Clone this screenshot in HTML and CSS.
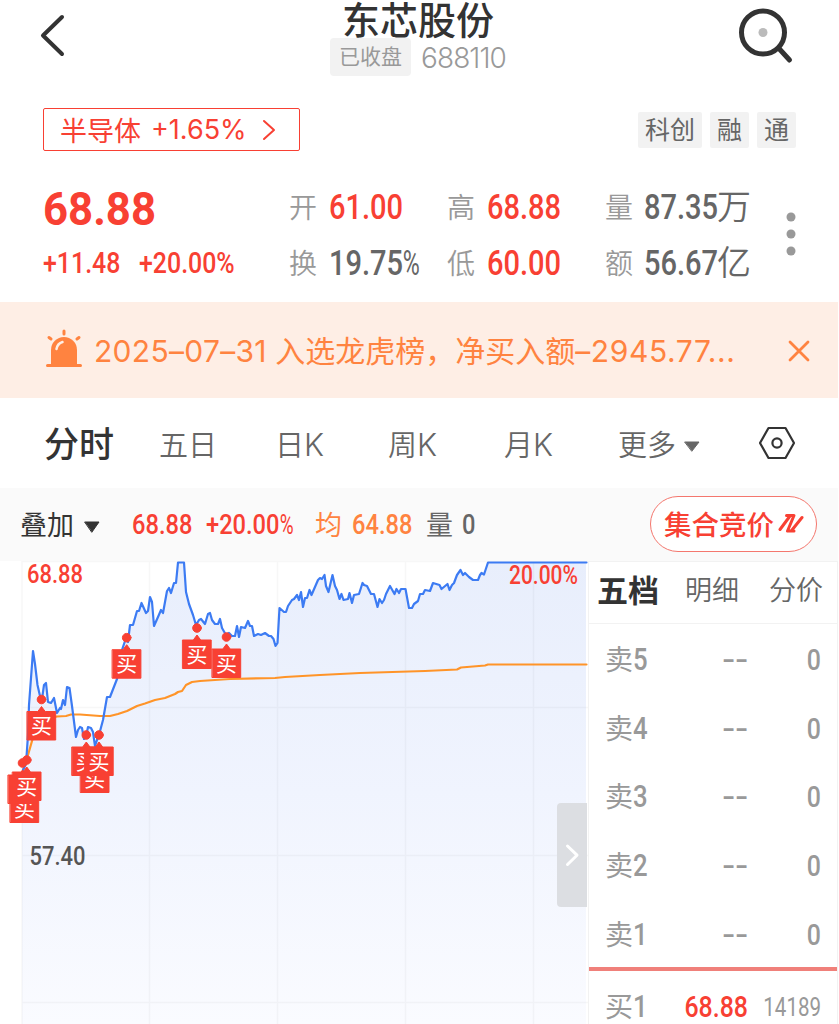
FILE: index.html
```html
<!DOCTYPE html>
<html lang="zh-CN">
<head>
    <meta charset="UTF-8">
    <meta name="viewport" content="width=device-width, initial-scale=1.0">
    <title>东芯股份 688110</title>
    <link rel="stylesheet" href="styles.css">
</head>
<body>
    <header class="header">
        <svg class="back" width="30" height="44" viewBox="0 0 30 44"><path d="M24 4 5 22.500 24 41"/></svg>
        <div class="title">
            <h1>东芯股份</h1>
            <div class="subtitle"><span class="status">已收盘</span><span class="code">688110</span></div>
        </div>
        <svg class="search" width="60" height="60" viewBox="0 0 60 60">
            <circle cx="28" cy="27.500" r="21.500"/>
            <path d="M44 43.500 54.500 55"/>
            <circle class="dot" cx="28" cy="27.500" r="4.500"/>
        </svg>
    </header>

    <div class="sector-row">
        <a class="sector"><span>半导体</span><span class="sector-pct">+1.65%</span>
            <svg width="14" height="22" viewBox="0 0 14 22"><path d="M2 2 12 11 2 20"/></svg>
        </a>
        <div class="tags"><span>科创</span><span>融</span><span>通</span></div>
    </div>

    <section class="quote">
        <div class="price">
            <div class="last num">68.88</div>
            <div class="change"><span class="num">+11.48</span><span class="num">+20.00%</span></div>
        </div>
        <div class="stats">
            <label>开</label><span class="num red">61.00</span>
            <label>高</label><span class="num red">68.88</span>
            <label>量</label><span class="amount"><b class="num">87.35</b><i>万</i></span>
            <label>换</label><span class="num">19.75<small>%</small></span>
            <label>低</label><span class="num red">60.00</span>
            <label>额</label><span class="amount"><b class="num">56.67</b><i>亿</i></span>
        </div>
        <svg class="more" width="10" height="46" viewBox="0 0 10 46"><circle cx="5" cy="6" r="4.500"/><circle cx="5" cy="23" r="4.500"/><circle cx="5" cy="40" r="4.500"/></svg>
    </section>

    <div class="notice">
        <svg class="alarm" width="38" height="40" viewBox="0 0 38 40">
            <path d="M6 36V21a13 13 0 0 1 26 0v15z"/>
            <path class="ray" d="M2.500 36.500h33M19 2v3M4 8.500l2 1.500M34 8.500 32 10"/>
            <path class="shine" d="M11.500 20q1-5.500 6-7"/>
        </svg>
        <p><span class="date">2025–07–31</span> 入选龙虎榜，净买入额<span class="sum">–2945.77...</span></p>
        <svg class="close" width="22" height="22" viewBox="0 0 22 22"><path d="M2 2 20 20M20 2 2 20"/></svg>
    </div>

    <nav class="tabs">
        <a class="active">分时</a>
        <a>五日</a>
        <a>日<span>K</span></a>
        <a>周<span>K</span></a>
        <a>月<span>K</span></a>
        <a>更多<svg width="16" height="11" viewBox="0 0 16 11"><path d="M1 1h14L8 10z"/></svg></a>
        <svg class="settings" width="38" height="36" viewBox="0 0 38 36">
            <path d="M10.500 3h17L36 18l-8.500 15h-17L2 18z"/>
            <circle cx="19" cy="18" r="4.600"/>
        </svg>
    </nav>

    <div class="legend">
        <span class="overlay">叠加<svg width="16" height="12" viewBox="0 0 16 12"><path d="M1 1h14L8 11z"/></svg></span>
        <span class="num red">68.88</span>
        <span class="num red">+20.00<small>%</small></span>
        <span class="avg">均</span>
        <span class="num avg">64.88</span>
        <span class="vol">量</span>
        <span class="num vol">0</span>
        <button class="auction">集合竞价<svg width="27" height="20" viewBox="0 0 27 20"><path d="M3 16.500 13 3M9.500 2.500H17L10.500 18H17M15 17 25 4.500"/></svg></button>
    </div>

    <main class="main">
        <svg class="chart" width="588" height="463" viewBox="0 561 588 463">
            <defs>
                <linearGradient id="fill" x1="0" y1="561" x2="0" y2="1024" gradientUnits="userSpaceOnUse">
                    <stop offset="0" stop-color="#e8eefc"/>
                    <stop offset="0.500" stop-color="#f0f4fe"/>
                    <stop offset="1" stop-color="#fafbff"/>
                </linearGradient>
            </defs>
            <path class="area" fill="url(#fill)" d="M22 1024V772L26 764 28 735 29 705 33 651 35 664 37.500 685 40 696 42 699 44 685 46 683 48 702 51 703 54 698 57 713 60 708 61 709 63 700 65 705 67 687 69.500 688 72 706 76 737 78 730 80 727 82 728 84 739 86 737 88 727 91 728 93 732 95 746 97 740 99 735 103 720 107 697 110 697 117 679 122 650 126 638 128 642 130 625 133 625 137 611 139 611 141.500 603 146 613 148 611 150 597 152 602 154 626 158 617 161 610 163 613 167 591 169 588 171 593 174 583 176 583 178 562 184 562 186 592 189 604 193 615 196 625 199 620 201 619 205 624 208 614 210 613 212 620 215 624 218 624 220 619 222 628 226 635 229 633 232 636 235 636 237 626 239 637 241 627 245 628 248 621 250 626 252 626 254 636 258 634 261 635 265 633 269 636 271 636 273.500 639 275.500 646 277.500 643 279.500 608 284 612 286 612 288 606 292 600 294 599 297 595 299 600 301 592 303 607 305 598 307 598 309.500 590 311.500 595 318 580 320 578 322 579 324.500 575 326 586 328.500 592 332.500 575 335 586 337 590 339.500 599 341.500 594 343.500 600 348 599 349.500 593 352 603 354 595 359 594 362.500 583 364 585 367 586 371 594 374 594 377.500 607 379.500 599 382 603 384 600 386 594 390 586 394.500 594 396.500 589 399 593 401 589 405.500 589 409 608 412 608 414 604 418 601 420 594 423 594 425 590 430 591 433 583 439.500 585 441.500 589 447.500 584 449.500 590 452 585 454 583 457 575 460.500 570 463 575 465 573 469 577 473 580 478 580 480 575 481.500 573 484 574.500 488 562.500 586 562.500V1024z"/>
            <path class="grid" d="M22 561.500H588M22 707.500H588M22 855.500H588M22 1002.500H588M22 561V1024M149.500 561V1024M277.500 561V1024M405.500 561V1024M533.500 561V1024"/>
            <path class="average" d="M23 770 28 755 32 741 36 727 42 720 57 716.500 66 716 71 714.500 80 714.500 100 716 110 716 118 714 127 711 137 706 145 703.500 155 700 165 698 175 694 178 692 182 691 186 685 192 682 200 681 230 679 275 678 285 677 320 675 360 673 425 671 457 669.500 461 667.500 485 665.500 488 664.500 586.500 664.500"/>
            <path class="line" d="M23 770 26 764 28 735 29 705 33 651 35 664 37.500 685 40 696 42 699 44 685 46 683 48 702 51 703 54 698 57 713 60 708 61 709 63 700 65 705 67 687 69.500 688 72 706 76 737 78 730 80 727 82 728 84 739 86 737 88 727 91 728 93 732 95 746 97 740 99 735 103 720 107 697 110 697 117 679 122 650 126 638 128 642 130 625 133 625 137 611 139 611 141.500 603 146 613 148 611 150 597 152 602 154 626 158 617 161 610 163 613 167 591 169 588 171 593 174 583 176 583 178 562.500 184 562.500 186 592 189 604 193 615 196 625 199 620 201 619 205 624 208 614 210 613 212 620 215 624 218 624 220 619 222 628 226 635 229 633 232 636 235 636 237 626 239 637 241 627 245 628 248 621 250 626 252 626 254 636 258 634 261 635 265 633 269 636 271 636 273.500 639 275.500 646 277.500 643 279.500 608 284 612 286 612 288 606 292 600 294 599 297 595 299 600 301 592 303 607 305 598 307 598 309.500 590 311.500 595 318 580 320 578 322 579 324.500 575 326 586 328.500 592 332.500 575 335 586 337 590 339.500 599 341.500 594 343.500 600 348 599 349.500 593 352 603 354 595 359 594 362.500 583 364 585 367 586 371 594 374 594 377.500 607 379.500 599 382 603 384 600 386 594 390 586 394.500 594 396.500 589 399 593 401 589 405.500 589 409 608 412 608 414 604 418 601 420 594 423 594 425 590 430 591 433 583 439.500 585 441.500 589 447.500 584 449.500 590 452 585 454 583 457 575 460.500 570 463 575 465 573 469 577 473 580 478 580 480 575 481.500 573 484 574.500 488 562.500 586.500 562.500"/>
            <g class="marker" transform="translate(24.500 782)"><path d="M-14.200 12h10.500l3.700-5 3.700 5h10.500v28.500h-28.400z"/><text y="33.500">买</text></g>
            <g class="marker" transform="translate(22.500 763)"><circle r="4.300"/><path d="M-14.200 12h10.500l3.700-5 3.700 5h10.500v28.500h-28.400z"/></g>
            <g class="marker" transform="translate(26.800 760)"><circle r="4.300"/><path d="M-14.200 12h10.500l3.700-5 3.700 5h10.500v28.500h-28.400z"/><text y="33.500">买</text></g>
            <g class="marker" transform="translate(41.500 699.500)"><circle r="4.300"/><path d="M-14.200 12h10.500l3.700-5 3.700 5h10.500v28.500h-28.400z"/><text y="33.500">买</text></g>
            <g class="marker" transform="translate(94.800 752)"><path d="M-14.200 12h10.500l3.700-5 3.700 5h10.500v28.500h-28.400z"/><text y="33.500">买</text></g>
            <g class="marker" transform="translate(86.300 735)"><circle r="4.300"/><path d="M-14.200 12h10.500l3.700-5 3.700 5h10.500v28.500h-28.400z"/><text y="33.500">买</text></g>
            <g class="marker" transform="translate(99 735)"><circle r="4.300"/><path d="M-14.200 12h10.500l3.700-5 3.700 5h10.500v28.500h-28.400z"/><text y="33.500">买</text></g>
            <g class="marker" transform="translate(126.700 637.700)"><circle r="4.300"/><path d="M-14.200 12h10.500l3.700-5 3.700 5h10.500v28.500h-28.400z"/><text y="33.500">买</text></g>
            <g class="marker" transform="translate(197 628)"><circle r="4.300"/><path d="M-14.200 12h10.500l3.700-5 3.700 5h10.500v28.500h-28.400z"/><text y="33.500">买</text></g>
            <g class="marker" transform="translate(226.500 637)"><circle r="4.300"/><path d="M-14.200 12h10.500l3.700-5 3.700 5h10.500v28.500h-28.400z"/><text y="33.500">买</text></g>
            <text class="axis up" x="27" y="583" textLength="56" lengthAdjust="spacingAndGlyphs">68.88</text>
            <text class="axis up" x="509" y="583.500" textLength="69" lengthAdjust="spacingAndGlyphs">20.00%</text>
            <text class="axis" x="29.500" y="864.500" textLength="56" lengthAdjust="spacingAndGlyphs">57.40</text>
            <path class="handle" d="M587 803h-26a4 4 0 0 0-4 4v96a4 4 0 0 0 4 4h26z"/>
            <path class="handle-arrow" d="M567.500 846 577 855.200 567.500 864.500"/>
        </svg>
        <aside class="book">
            <div class="book-tabs"><a class="active">五档</a><a>明细</a><a>分价</a></div>
            <div class="level"><span>卖<b class="num">5</b></span><span class="num none">--</span><span class="num">0</span></div>
            <div class="level"><span>卖<b class="num">4</b></span><span class="num none">--</span><span class="num">0</span></div>
            <div class="level"><span>卖<b class="num">3</b></span><span class="num none">--</span><span class="num">0</span></div>
            <div class="level"><span>卖<b class="num">2</b></span><span class="num none">--</span><span class="num">0</span></div>
            <div class="level"><span>卖<b class="num">1</b></span><span class="num none">--</span><span class="num">0</span></div>
            <div class="level bid"><span>买<b class="num">1</b></span><span class="num red">68.88</span><span class="num lots">14189</span></div>
        </aside>
    </main>
</body>
</html>
```
FILE: styles.css
```css
* {
    box-sizing: border-box;
}
body {
    margin: 0;
    height: 1024px;
    overflow: hidden;
    background: #fff;
    color: #333;
    font-family: Inter, "Noto Sans CJK SC", sans-serif;
}
svg {
    flex: none;
    fill: none;
    stroke-linecap: round;
    stroke-linejoin: round;
}
.num {
    display: inline-block;
    font-family: Roboto, sans-serif;
    font-weight: 500;
    white-space: nowrap;
    transform: scaleX(0.83);
    transform-origin: left center;
}
.red {
    color: #f84033;
}

.header {
    display: flex;
    justify-content: space-between;
    height: 108px;
    padding: 0 43px 0 38px;
}
.back {
    margin-top: 13px;
    stroke: #333;
    stroke-width: 4;
}
.title {
    display: flex;
    flex-direction: column;
    align-items: center;
    padding-left: 33px;
}
.title h1 {
    margin: 0;
    height: 38px;
    font-size: 38px;
    font-weight: 500;
    line-height: 40px;
}
.subtitle {
    display: flex;
    align-items: center;
    gap: 10px;
    height: 38px;
    color: #999;
}
.status {
    width: 81px;
    border-radius: 4px;
    background: #f2f2f2;
    font-size: 21px;
    line-height: 38px;
    text-align: center;
}
.code {
    padding-top: 1px;
    font-size: 28px;
    font-weight: 300;
    letter-spacing: -0.9px;
}
.search {
    margin-top: 5px;
    margin-right: 1px;
    stroke: #333;
    stroke-width: 5;
}
.search .dot {
    fill: #bbb;
    stroke: none;
}

.sector-row {
    display: flex;
    justify-content: space-between;
    align-items: center;
    height: 43px;
    padding: 0 43px;
}
.sector {
    display: flex;
    align-items: center;
    width: 257px;
    height: 43px;
    padding: 0 0 0 16px;
    border: 1.5px solid #f84033;
    border-radius: 2px;
    color: #f84033;
    font-size: 27px;
}
.sector-pct {
    width: 121px;
    padding-left: 10px;
}
.sector svg {
    stroke: #f84033;
    stroke-width: 2;
}
.tags {
    display: flex;
    gap: 8px;
}
.tags span {
    padding: 0 7px;
    border-radius: 2px;
    background: #f2f2f2;
    color: #666;
    font-size: 25px;
    line-height: 36px;
}

.quote {
    display: grid;
    grid-template-columns: 246px 498px 10px;
    height: 151px;
    padding: 28px 0 0 43px;
}
.price {
    color: #f84033;
}
.last {
    font-size: 47px;
    font-weight: 700;
    line-height: 60px;
    transform: scaleX(0.93);
}
.change {
    display: grid;
    grid-template-columns: 96px 1fr;
    margin-top: 8px;
    font-size: 30px;
    line-height: 32px;
}
.stats {
    display: grid;
    grid-template-columns: 40px 118px 40px 118px 39px 1fr;
    grid-template-rows: 56px 56px;
    align-items: center;
    color: #666;
    font-size: 35px;
}
.stats label {
    padding-bottom: 2px;
    color: #999;
    font-size: 28px;
    font-weight: 350;
}
.num small {
    display: inline-block;
    font-size: inherit;
    font-weight: 400;
    transform: scaleX(0.8);
    transform-origin: left center;
}
.amount {
    display: grid;
    grid-template-columns: 73px 34px;
    align-items: center;
}
.amount i {
    font-size: 34px;
    font-style: normal;
    font-weight: 350;
    line-height: 48px;
}
.more {
    margin-top: 32px;
    margin-left: -1px;
    fill: #999;
}

.notice {
    display: flex;
    align-items: center;
    height: 96px;
    width: 838px;
    padding: 0 28px 0 45px;
    background: #feeee5;
    color: #ff8340;
}
.alarm {
    fill: #ff8340;
    margin-top: -3px;
}
.alarm .ray {
    stroke: #ff8340;
    stroke-width: 3;
}
.alarm .shine {
    fill: none;
    stroke: #feeee5;
    stroke-width: 2.5;
}
.notice p {
    margin: 0;
    padding: 0 0 2px 11px;
    width: 706px;
    font-size: 30px;
    white-space: nowrap;
}
.date {
    letter-spacing: 0.3px;
}
.sum {
    letter-spacing: 0.6px;
}
.close {
    margin-top: 1px;
    stroke: #ff8340;
    stroke-width: 2.8;
}

.tabs {
    display: grid;
    grid-template-columns: 115px 116px 113px 116px 114px 140px 38px;
    align-items: center;
    height: 90px;
    padding-left: 44px;
    color: #666;
    font-size: 29px;
    font-weight: 350;
}
.tabs a {
    padding-bottom: 1px;
}
.tabs a span {
    font-size: 31px;
}
.tabs a svg {
    margin: 0 0 4px 8px;
    fill: #666;
    stroke: #666;
}
.tabs .active {
    padding-bottom: 3px;
    color: #333;
    font-size: 35px;
    font-weight: 500;
}
.settings {
    stroke: #333;
    stroke-width: 2.2;
}

.legend {
    display: grid;
    grid-template-columns: 112px 74px 109px 37px 74px 36px 188px 167px;
    align-items: center;
    width: 838px;
    height: 73px;
    padding-left: 20px;
    background: #fafafa;
    font-size: 27px;
}
.legend > span:not(.num) {
    padding-bottom: 2px;
}
.legend .num {
    font-size: 28.5px;
}
.overlay svg {
    margin: 0 0 2px 10px;
    fill: #333;
    stroke: #333;
}
.avg {
    color: #ff8340;
}
.vol {
    color: #666;
}
.auction {
    display: flex;
    align-items: center;
    gap: 3px;
    height: 56px;
    margin-top: -1px;
    padding: 0 0 2px 13px;
    border: 1.5px solid #f4776e;
    border-radius: 28px;
    background: #fff;
    color: #f84033;
    font: 500 27.5px "Noto Sans CJK SC", sans-serif;
}
.auction svg {
    stroke: #f84033;
    stroke-width: 3;
}

.main {
    display: flex;
    height: 463px;
}
.grid {
    stroke: #000;
    stroke-opacity: 0.03;
    stroke-width: 1.5;
}
.average {
    stroke: #ff9428;
    stroke-width: 2.2;
}
.line {
    stroke: #3c7bf3;
    stroke-width: 2.2;
}
.marker {
    fill: #f84033;
}
.marker path,
.marker circle {
    stroke: #f84033;
}
.marker text {
    fill: #fff;
    font: 400 21px "Noto Sans CJK SC", sans-serif;
    text-anchor: middle;
}
.axis {
    fill: #555;
    font: 500 25px Roboto, sans-serif;
}
.axis.up {
    fill: #f84033;
}
.handle {
    fill: #dcdee2;
}
.handle-arrow {
    stroke: #fff;
    stroke-width: 3;
}

.book {
    width: 250px;
    border: solid #f2f2f2;
    border-width: 1px 1px 0;
    color: #999;
}
.book-tabs {
    display: grid;
    grid-template-columns: 88px 84px 1fr;
    align-items: center;
    height: 62px;
    padding-left: 8px;
    padding-bottom: 9px;
    border-bottom: 1px solid #f2f2f2;
    color: #666;
    font-size: 27px;
    font-weight: 350;
}
.book-tabs .active {
    color: #333;
    font-size: 31px;
    font-weight: 700;
}
.level {
    display: grid;
    grid-template-columns: 1fr 91px 73px;
    align-items: center;
    height: 68.7px;
    padding: 3px 16px 0 16px;
    font-size: 28px;
    line-height: 40px;
}
.level > .num {
    text-align: right;
    transform-origin: right center;
    font-size: 30px;
}
.level b {
    font-size: 31px;
}
.level .none {
    transform: scaleX(1.3);
    font-size: 29px;
}
.level .lots {
    font-size: 26px;
    font-weight: 400;
    transform: scaleX(0.79);
}
.bid {
    padding-top: 6px;
    border-top: 4px solid #f0807a;
}
```
